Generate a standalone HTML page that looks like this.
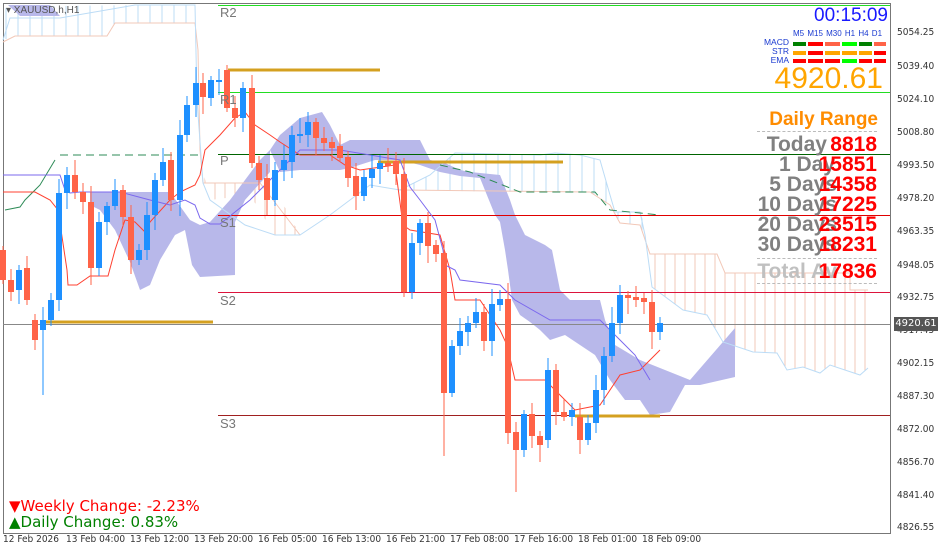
<!DOCTYPE html>
<html><head><meta charset="utf-8">
<style>
body{margin:0;width:939px;height:552px;overflow:hidden;background:#fff;font-family:"Liberation Sans",sans-serif;position:relative}
.ax{position:absolute;left:897px;font-size:10px;color:#333;font-family:"DejaVu Sans",sans-serif;transform:scaleX(0.9);transform-origin:left}
.tl{position:absolute;top:534px;font-size:10px;color:#333;font-family:"DejaVu Sans",sans-serif;transform:scaleX(0.9);transform-origin:left}
.lvl{position:absolute;left:220px;font-size:13px;color:#777}
.row{position:absolute;right:112px;font-size:21px;line-height:21px;font-weight:bold;color:#808080;white-space:nowrap}
.num{position:absolute;right:62px;font-size:21px;line-height:21px;font-weight:bold;color:#f00}
</style></head><body>
<svg id="s" width="939" height="552" style="position:absolute;left:0;top:0">
<defs>
<pattern id="hp" width="10" height="10" patternUnits="userSpaceOnUse"><line x1="5" y1="0" x2="5" y2="10" stroke="#f2c8b8"/></pattern>
<pattern id="hb" width="12" height="10" patternUnits="userSpaceOnUse"><line x1="6" y1="0" x2="6" y2="10" stroke="#bcdcf6"/></pattern>
</defs>
<line x1="3.5" y1="3" x2="3.5" y2="533" stroke="#777"/>
<line x1="890.5" y1="3" x2="890.5" y2="533" stroke="#777"/>
<line x1="3" y1="533.5" x2="891" y2="533.5" stroke="#777"/>
<line x1="3" y1="3.5" x2="891" y2="3.5" stroke="#777"/>
<polygon fill="url(#hb)" points="3,40 15,36 107,36 115,23 195,23 195,5 135,5 60,6 3,8"/>
<polygon fill="url(#hb)" points="520,192 590,192 610,205 620,223 640,225 650,254 650,240 640,212 615,212 610,195 600,160 580,155 555,153 540,155 455,153 430,175 400,190"/>
<polygon fill="url(#hp)" points="198,150 203,183 260,183 270,180 300,235 275,235 250,195 210,200"/>
<polygon fill="url(#hp)" points="652,254 717,254 725,273 850,273 850,290 868,290 868,368 860,375 830,365 820,373 803,367 787,370 777,353 753,352 723,342 707,315 683,310 652,287"/>
<polygon fill="#b8b8ea" points="90,192 170,192 190,220 200,225 210,222 230,200 245,180 260,160 270,150 270,172 245,200 235,222 235,275 200,277 192,265 185,230 175,235 160,260 150,285 140,290 130,262 115,230 100,210 90,205"/>
<polygon fill="#b8b8ea" points="270,150 280,135 300,118 322,112 330,125 340,145 350,140 360,140 420,140 430,160 445,163 460,170 470,172 500,175 510,200 515,215 525,235 545,245 552,250 560,290 570,300 600,300 605,320 615,345 640,360 690,380 735,328 735,377 700,385 685,385 670,412 650,415 640,400 625,400 610,380 595,355 580,345 565,335 550,340 540,330 530,322 520,315 512,300 508,270 505,250 500,222 495,215 480,178 460,176 440,172 420,165 400,160 375,160 350,168 340,170 320,170 300,170 280,172"/>
<polygon fill="#b8b8ea" points="8,5 50,5 60,16 20,16"/>
<polyline fill="none" stroke="#f2c8b8" points="3,42 15,36 107,36 115,23 195,23 198,50 200,150 203,183 260,183 300,235"/>
<polyline fill="none" stroke="#f2c8b8" points="400,190 590,192 610,205 620,223 640,225 650,254 717,254 725,273 850,273 850,290 868,290"/>
<polyline fill="none" stroke="#bcdcf6" points="3,40 10,18 60,18 135,5 195,5 197,100 203,183 210,200 245,225 275,235 300,235 330,215 370,185 400,190 430,175 455,153 540,155 555,153 580,155 600,160 610,195 615,212 640,212 645,235 652,287 683,310 707,315 723,342 753,352 777,353 787,370 803,367 820,373 830,365 860,375 868,368"/>
<line x1="218" y1="5.5" x2="890" y2="5.5" stroke="#22dd22"/>
<line x1="218" y1="92.5" x2="890" y2="92.5" stroke="#22dd22"/>
<line x1="218" y1="154.5" x2="890" y2="154.5" stroke="#006400"/>
<line x1="218" y1="215.5" x2="890" y2="215.5" stroke="#e00000"/>
<line x1="218" y1="292.5" x2="890" y2="292.5" stroke="#dc143c"/>
<line x1="3" y1="324.5" x2="890" y2="324.5" stroke="#888"/>
<line x1="218" y1="415.5" x2="890" y2="415.5" stroke="#a02020"/>
<line x1="60" y1="155" x2="200" y2="155" stroke="#2e8b57" stroke-dasharray="8,5"/>
<polyline fill="none" stroke="#2e8b57" points="5,210 20,207 25,200 35,190 40,185 55,160"/>
<polyline fill="none" stroke="#2e8b57" stroke-dasharray="8,5" points="440,165 470,172 520,192 595,192 610,210 660,215"/>
<g stroke="#d4a020" stroke-width="3">
<line x1="228" y1="70" x2="380" y2="70"/><line x1="378" y1="162" x2="563" y2="162"/>
<line x1="40" y1="322" x2="213" y2="322"/><line x1="575" y1="416" x2="660" y2="416"/></g>
<polyline fill="none" stroke="#ff4030" points="3,192 35,192 50,200 58,210 67,270 68,285 77,285 90,276 108,276 115,250 125,220 135,222 145,232 150,222 170,200 180,192 195,185 200,175 205,150 220,135 235,118 245,112 255,125 270,135 280,142 300,155 330,155 345,165 360,170 395,165 403,225 410,230 440,235 450,270 455,300 480,300 500,330 507,345 515,380 545,380 560,395 575,410 600,405 620,375 640,370 660,350"/>
<polyline fill="none" stroke="#7b68ee" points="3,175 60,175 65,190 70,193 80,192 120,192 150,200 170,205 185,200 195,205 200,218 210,224 220,224 250,200 290,160 300,150 340,150 400,160 410,187 420,200 435,220 443,250 445,265 455,270 460,280 500,285 515,300 550,320 600,320 610,330 620,340 635,355 650,380"/>
<g id="c"></g>
</svg>
<script>
var d=[
['r',250,280],['r',280,292],['b',270,290],['r',268,300],['r',320,340],['b',320,330],['b',300,320],['b',193,300],['b',175,193],['r',175,192],['r',192,202],['r',202,268],['b',222,268],['b',206,222],['b',190,206],['r',190,217],['r',217,260],['b',250,260],['b',215,250],['b',180,215],['b',162,180],['r',160,200],['b',135,200],['b',105,135],['b',83,105],['r',83,97],['b',80,98],['b',80,81],['r',70,108],['r',108,118],['b',88,118],['r',88,163],['r',163,180],['r',178,200],['b',170,200],['b',160,170],
['b',135,162],['b',134,135],['b',122,135],['r',122,138],['r',138,143],['r',142,148],['r',146,158],['r',157,178],['r',176,196],['b',177,196],['b',169,178],['b',163,169],['r',163,166],['r',161,174],['r',174,292],['b',243,292],['b',223,243],['r',223,246],['r',245,254],['r',253,393],['b',346,393],['b',331,346],['b',323,332],['b',312,323],['r',312,341],['b',304,341],['b',299,305],['r',299,433],['r',432,450],['b',414,450],
['r',414,436],['r',436,445],['b',370,440],['r',370,412],['r',412,417],['b',410,417],['r',417,440],['b',423,440],['b',390,423],['b',356,390],['b',323,356],['b',295,323],['r',295,298],['r',297,300],['r',298,302],['r',302,332],['b',323,332]];
var xs=[3,11,19,27,35,43,51,59,67,75,83,91,99,107,115,123,131,139,147,155,163,171,180,187,196,203,211,219,227,235,243,252,259,267,275,284,292];
for(var k=37;k<d.length;k++)xs.push(292+(k-36)*8);
var h='';
for(var i=0;i<d.length;i++){var x=xs[i]-3,c=d[i][0]=='b'?'#1e90ff':'#ff6347',t=d[i][1],b=d[i][2];if(b-t<2)b=t+2;
var wt=t-4-(i*7%13),wb=b+4+(i*5%14);
if(i==5)wb=395;if(i==55)wb=456;if(i==64)wb=492;if(i==50)wb=297;
h+='<line x1="'+(x+3)+'" y1="'+wt+'" x2="'+(x+3)+'" y2="'+wb+'" stroke="'+c+'"/><rect x="'+x+'" y="'+t+'" width="6" height="'+(b-t)+'" fill="'+c+'"/>';}
document.getElementById('c').innerHTML=h;
</script>
<div style="position:absolute;left:6px;top:5px;font-size:10px;color:#555">▾ XAUUSD,h,H1</div>
<div class="lvl" style="top:5px">R2</div><div class="lvl" style="top:92px">R1</div><div class="lvl" style="top:153px">P</div>
<div class="lvl" style="top:215px">S1</div><div class="lvl" style="top:293px">S2</div><div class="lvl" style="top:416px">S3</div>
<div style="position:absolute;right:51px;top:5px;font-size:19px;color:#1a1aff">00:15:09</div>
<div style="position:absolute;left:793px;top:29px;font-size:8px;color:#1a3ad0;word-spacing:1px">M5 M15 M30 H1 H4 D1</div>
<div style="position:absolute;left:760px;top:38px;font-size:8.5px;color:#1a3ad0;line-height:9px;text-align:right;width:29px">MACD<br>STR<br>EMA</div>
<svg width="100" height="30" style="position:absolute;left:793px;top:41px">
<g><rect x="0" y="1" width="13" height="4" fill="#008000"/><rect x="15" y="1" width="15" height="4" fill="#f00"/><rect x="32" y="1" width="15" height="4" fill="#ff6347"/><rect x="49" y="1" width="15" height="4" fill="#00ff00"/><rect x="66" y="1" width="13" height="4" fill="#008000"/><rect x="81" y="1" width="12" height="4" fill="#ff6347"/></g>
<g fill="#ffa500"><rect x="0" y="10" width="13" height="4"/><rect x="15" y="10" width="15" height="4" fill="#f00"/><rect x="32" y="10" width="15" height="4"/><rect x="49" y="10" width="15" height="4"/><rect x="66" y="10" width="13" height="4"/><rect x="81" y="10" width="12" height="4" fill="#f00"/></g>
<g fill="#f00"><rect x="0" y="18" width="13" height="4"/><rect x="15" y="18" width="15" height="4"/><rect x="32" y="18" width="15" height="4"/><rect x="49" y="18" width="15" height="4" fill="#00ff00"/><rect x="66" y="18" width="13" height="4"/><rect x="81" y="18" width="12" height="4"/></g></svg>
<div style="position:absolute;right:56px;top:62px;font-size:30px;color:#ffa500">4920.61</div>
<div style="position:absolute;right:61px;top:109px;font-size:19px;font-weight:bold;color:#ff8c00">Daily Range</div>
<div style="position:absolute;left:757px;top:131px;width:120px;border-top:1px dashed #bbb"></div>
<div class="row" style="top:134px">Today</div><div class="num" style="top:134px">8818</div>
<div class="row" style="top:154px;right:104px">1 Day</div><div class="num" style="top:154px">15851</div>
<div class="row" style="top:174px;right:102px">5 Days</div><div class="num" style="top:174px">14358</div>
<div class="row" style="top:194px;right:102px">10 Days</div><div class="num" style="top:194px">17225</div>
<div class="row" style="top:214px;right:102px">20 Days</div><div class="num" style="top:214px">23515</div>
<div class="row" style="top:234px;right:102px">30 Days</div><div class="num" style="top:234px">18231</div>
<div style="position:absolute;left:757px;top:258px;width:120px;border-top:1px dashed #bbb"></div>
<div class="row" style="top:261px;right:102px;color:#c0c0c0">Total Av</div><div class="num" style="top:261px">17836</div>
<div style="position:absolute;left:757px;top:283px;width:120px;border-top:1px dashed #bbb"></div>
<div style="position:absolute;left:9px;top:497px;font-size:15px;color:#f00;font-family:'DejaVu Sans',sans-serif">▼Weekly Change: -2.23%</div>
<div style="position:absolute;left:9px;top:513px;font-size:15px;color:#008000;font-family:'DejaVu Sans',sans-serif">▲Daily Change: 0.83%</div>
<div class="ax" style="top:27px">5054.25</div><div class="ax" style="top:61px">5039.40</div><div class="ax" style="top:94px">5024.10</div><div class="ax" style="top:127px">5008.80</div>
<div class="ax" style="top:160px">4993.50</div><div class="ax" style="top:193px">4978.20</div><div class="ax" style="top:226px">4963.35</div><div class="ax" style="top:260px">4948.05</div>
<div class="ax" style="top:292px">4932.75</div><div class="ax" style="top:325px">4917.45</div><div class="ax" style="top:358px">4902.15</div><div class="ax" style="top:391px">4887.30</div>
<div class="ax" style="top:424px">4872.00</div><div class="ax" style="top:457px">4856.70</div><div class="ax" style="top:490px">4841.40</div><div class="ax" style="top:522px">4826.55</div>
<div style="position:absolute;left:894px;top:317px;width:44px;height:14px;background:#555;color:#fff;font-size:10px;line-height:14px;text-align:center;font-family:'DejaVu Sans',sans-serif">4920.61</div>
<div class="tl" style="left:3px">12 Feb 2026</div><div class="tl" style="left:66px">13 Feb 04:00</div><div class="tl" style="left:130px">13 Feb 12:00</div><div class="tl" style="left:194px">13 Feb 20:00</div>
<div class="tl" style="left:258px">16 Feb 05:00</div><div class="tl" style="left:322px">16 Feb 13:00</div><div class="tl" style="left:386px">16 Feb 21:00</div><div class="tl" style="left:450px">17 Feb 08:00</div>
<div class="tl" style="left:514px">17 Feb 16:00</div><div class="tl" style="left:578px">18 Feb 01:00</div><div class="tl" style="left:642px">18 Feb 09:00</div>
</body></html>
